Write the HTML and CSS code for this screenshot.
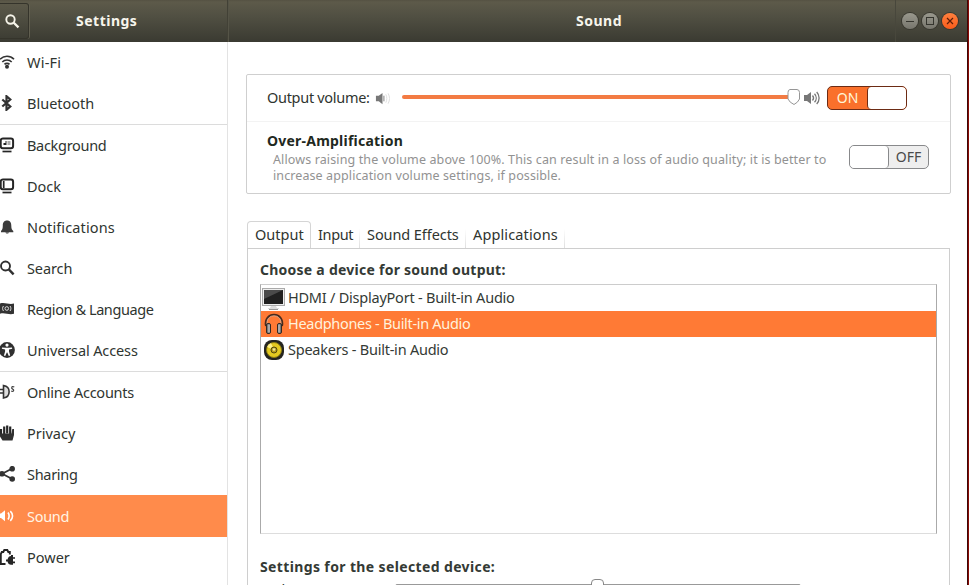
FILE: index.html
```
<!DOCTYPE html>
<html lang="en">
<head>
<meta charset="utf-8">
<title>Settings</title>
<link rel="stylesheet" href="styles.css">
</head>
<body>
<div class="window">
  <header class="titlebar">
    <div class="title-left">
      <div class="search-button"><svg width="16" height="16" viewBox="0 0 16 16"><circle cx="5.5" cy="5.500" r="4.200" fill="none" stroke="#f6f4e9" stroke-width="1.900"/><path d="M8.500 8.500 13.500 13.300" stroke="#f6f4e9" stroke-width="2.300"/></svg></div>
      <h1 class="t-settings">Settings</h1>
    </div>
    <div class="title-right">
      <h1 class="t-sound">Sound</h1>
      <div class="controls">
        <span class="control"><svg width="16" height="16"><path d="M4 8.5h8" stroke="#35352e"/></svg></span>
        <span class="control"><svg width="16" height="16"><rect x="4.5" y="4.5" width="7" height="7" fill="none" stroke="#35352e"/></svg></span>
        <span class="control close"><svg width="16" height="16"><path d="m5 5 6 6m0-6-6 6" stroke="#5c1d08" stroke-width="1.2"/></svg></span>
      </div>
    </div>
  </header>
  <div class="body">
    <nav class="sidebar">
      <div class="row"><svg class="icon" viewBox="0 0 16 16"><g fill="none" stroke="#333" stroke-width="1.6"><path d="M0 5.300a9.600 9.600 0 0 1 14 0M2.300 8a6.500 6.500 0 0 1 9.400 0M4.500 10.400a3.500 3.500 0 0 1 5 0"/></g><circle cx="7" cy="12.700" r="2" fill="#333"/></svg><span class="s-wifi">Wi-Fi</span></div>
      <div class="row line"><svg class="icon" viewBox="0 0 16 16"><path d="m2.300 4.500 8 7L6.500 14.800V1.200l3.800 3.300-8 7" fill="none" stroke="#333" stroke-width="2.200"/></svg><span class="s-bluetooth">Bluetooth</span></div>
      <div class="row"><svg class="icon" viewBox="0 0 16 16"><rect x=".7" y="1.500" width="12.400" height="9.800" rx="2.200" fill="#fff" stroke="#252525" stroke-width="2"/><path d="M3.500 8V6h2V4h1v4z" fill="#252525"/><path d="M7.500 4h3v4h-3z" fill="#aaa"/><path d="M2.500 14.500h9" stroke="#252525" stroke-width="1.700"/></svg><span class="s-background">Background</span></div>
      <div class="row"><svg class="icon" viewBox="0 0 16 16"><rect x=".7" y="1.500" width="12.400" height="9.800" rx="2.200" fill="#fff" stroke="#252525" stroke-width="2"/><path d="M3.700 3v7" stroke="#252525" stroke-width="1.700"/><path d="M2.500 14.500h9" stroke="#252525" stroke-width="1.700"/></svg><span class="s-dock">Dock</span></div>
      <div class="row"><svg class="icon" viewBox="0 0 16 16"><path d="M7 1.500c3.200 0 4.300 2.200 4.300 5.200 0 2.700.5 4 2 5.300v1.200H1V12c1.300-1.300 1.800-2.600 1.800-5.300C2.800 3.700 4 1.500 7 1.500zM5.500 13.500h3.400c0 1.400-3.400 1.400-3.400 0z" fill="#3b3b3b"/></svg><span class="s-notifications">Notifications</span></div>
      <div class="row"><svg class="icon" viewBox="0 0 16 16"><circle cx="5.500" cy="6" r="4.500" fill="none" stroke="#303030" stroke-width="1.900"/><path d="m8.800 9.300 4.800 5" stroke="#303030" stroke-width="2.400"/></svg><span class="s-search">Search</span></div>
      <div class="row"><svg class="icon" viewBox="0 0 16 16"><path d="M0 2.500c5-1.500 9 1.500 14 0v10.200c-5 1.600-9-1.500-14 0z" fill="#333"/><g fill="none" stroke="#ddd"><circle cx="6.800" cy="7.500" r="1.800"/><path d="M3.500 5c-1.200 1.300-1.200 3.500 0 5M10 5c1.200 1.400 1.200 3.600 0 5"/></g></svg><span class="s-region">Region &amp; Language</span></div>
      <div class="row line"><svg class="icon" viewBox="0 0 16 16"><circle cx="7" cy="8" r="7.900" fill="#303030"/><circle cx="7" cy="3.100" r="1.600" fill="#fff"/><path d="M2 5.400 5.500 5.800h3l3.500-.4.200 1.300-3.200.8v2.100l1.200 4-1.400.4-1.500-3.600h-.5L5.200 14l-1.300-.4 1.200-4V7.500l-3.200-.8z" fill="#fff"/></svg><span class="s-universal">Universal Access</span></div>
      <div class="row"><svg class="icon" viewBox="0 0 16 16"><path d="M0 5.500h3M0 9h3" stroke="#333" stroke-width="1.500"/><path d="M3.500 1.500v12.500c7.500-1.200 7.500-11.300 0-12.500z" fill="#ddd" stroke="#333" stroke-width="1.600"/><path d="M14.300 3c-3-1.300-3.200 1.500-1.600 2.100s1.200 2.900-1.600 1.900" fill="none" stroke="#444" stroke-width="1.200"/></svg><span class="s-online">Online Accounts</span></div>
      <div class="row"><svg class="icon" viewBox="0 0 16 16"><path d="M1 4v6M4.200 1.500v8M7.200.5v8M10.200 1.500v8" stroke="#252525" stroke-width="2.200"/><path d="M0 8.500h11.500L12.300 4H14v6l-1.500 5.500h-10L0 11.500z" fill="#303030"/></svg><span class="s-privacy">Privacy</span></div>
      <div class="row"><svg class="icon" viewBox="0 0 16 16"><path d="m12.200 2.500-10 5.300 10 5.200" fill="none" stroke="#333" stroke-width="1.800"/><g fill="#333"><circle cx="12.200" cy="2.700" r="2.800"/><circle cx="2" cy="7.800" r="2.800"/><circle cx="12.200" cy="13" r="2.800"/></g></svg><span class="s-sharing">Sharing</span></div>
      <div class="row active"><svg class="icon" viewBox="0 0 16 16"><path d="M0 5.500h1L5 2.300v11L1 10H0z" fill="#fff"/><path d="M8 4.500c1.300 2 1.300 5 0 7M10.300 3.200c3 2.800 3 6.800 0 9.600" fill="none" stroke="#fff" stroke-width="1.600"/></svg><span class="s-snd">Sound</span></div>
      <div class="row"><svg class="icon" viewBox="0 0 16 16"><path d="M5.500 15H.8V5l1-2h1.500l1-2h3l1 2h1.500v2.500" fill="none" stroke="#252525" stroke-width="1.900"/><path d="M6 10.500h1.500c.5-2.500 2-3.500 3.500-3.500V6h2v2.200h2v1.600h-2v2.800h2v1.600h-2v1.500h-2c-1.700 0-3-1-3.500-3.200H6z" fill="#252525"/></svg><span class="s-power">Power</span></div>
    </nav>
    <main class="content">
      <section class="volume-panel">
        <div class="volume-row">
          <span class="label s-outvol">Output volume:</span>
          <svg class="quiet" viewBox="0 0 16 16"><path d="M1 5h3l4-3v12l-4-3H1z" fill="#777"/><path d="M9.500 5v6" stroke="#777"/><path d="M11.500 3.500c1.500 3 1.500 6 0 9M14 2.500c2 4 2 7 0 11" fill="none" stroke="#ddd"/></svg>
          <div class="slider"><svg class="knob" width="14" height="18" viewBox="0 0 14 18"><path d="M3 1.500h7q2.500.2 2.500 3V11Q11 14.500 7 16.500 2.500 14.500 1 11V4.500q0-2.800 2-3z" fill="#fff" stroke="#969696"/></svg></div>
          <svg class="loud" viewBox="0 0 16 16"><path d="M0 5h3l4-3v12l-4-3H0z" fill="#777"/><path d="M8.500 5.500c1.300 1.500 1.300 3.500 0 5M10.500 3.700c2.300 2.500 2.300 6.100 0 8.600M12.700 2c3.200 3.300 3.200 8.700 0 12" fill="none" stroke="#777" stroke-width="1.300"/></svg>
          <div class="switch on"><span class="s-on">ON</span><i></i></div>
        </div>
        <div class="amp-row">
          <div class="amp-text">
            <h2 class="s-over">Over-Amplification</h2>
            <p><span class="s-p1">Allows raising the volume above 100%. This can result in a loss of audio quality; it is better to</span><br><span class="s-p2">increase application volume settings, if possible.</span></p>
          </div>
          <div class="switch off"><i></i><span class="s-off">OFF</span></div>
        </div>
      </section>
      <div class="tabs">
        <div class="tab current"><span class="s-output">Output</span></div>
        <div class="tab input"><span class="s-input">Input</span></div>
        <div class="tab effects"><span class="s-effects">Sound Effects</span></div>
        <div class="tab apps"><span class="s-apps">Applications</span></div>
      </div>
      <section class="notebook">
        <h2 class="s-choose">Choose a device for sound output:</h2>
        <div class="devices">
          <div class="device"><svg width="26" height="26" viewBox="0 0 26 26"><rect x="1.500" y="3.500" width="22" height="17" fill="#eee" stroke="#aaa"/><rect x="3" y="5" width="19" height="14" fill="#202020"/><path d="M3 5h19L3 14z" fill="#4a4a4a"/><path d="M10 21h5l1 2h2v1H7v-1h2z" fill="#ddd"/><path d="M8 24.500h9" stroke="#999"/></svg><span class="s-hdmi">HDMI / DisplayPort - Built-in Audio</span></div>
          <div class="device selected"><svg width="26" height="26" viewBox="0 0 26 26"><path d="M5 15C2 0 24 0 21 15" fill="none" stroke="#4b2a1c" stroke-width="2"/><path d="M6 13C5 2 21 2 20 13" fill="none" stroke="#d8b6a3" stroke-width=".8"/><g fill="#777" stroke="#332923"><rect x="5.500" y="12.500" width="4" height="10" rx="1.500"/><rect x="16.500" y="12.500" width="4" height="10" rx="1.500"/></g><path d="M8 13.500v8M18 13.500v8" stroke="#ddd"/></svg><span class="s-head">Headphones - Built-in Audio</span></div>
          <div class="device"><svg width="26" height="26" viewBox="0 0 26 26"><rect x="3" y="3" width="20" height="20" rx="8" fill="#252520"/><circle cx="13" cy="13" r="7.500" fill="#e4ca20" stroke="#8c7b12"/><path d="m13 13-7-3a8 8 0 0 1 4-4z" fill="#fff08a"/><circle cx="13" cy="13" r="3" fill="#b99f1b" stroke="#51480e"/><circle cx="13" cy="12.500" r="1.300" fill="#eee6a0"/></svg><span class="s-speak">Speakers - Built-in Audio</span></div>
        </div>
        <h2 class="s-selected">Settings for the selected device:</h2>
        <div class="balance"><span>Balance:</span><div class="balance-track"><i></i></div></div>
      </section>
    </main>
  </div>
</div>
</body>
</html>
```
FILE: styles.css
```
* { box-sizing: border-box; }
html, body { margin: 0; height: 100%; overflow: hidden; }
body { width: 969px; background: linear-gradient(90deg, #3c0808 968px, #8a0b05 968px); font: 14.5px/20px "Noto Sans", "Open Sans", sans-serif; color: #2f3530; }
h1, h2, p { margin: 0; }
svg { display: block; flex: none; }
span, h1, h2 { white-space: nowrap; }
.window { width: 967px; height: 585px; background: #fff; overflow: hidden; }
.titlebar { display: flex; height: 42px; background: linear-gradient(#555143 0, #5d5a4a 2px, #504f42 17px, #3b3b32 41px); }
.titlebar h1 { font-size: 14px; line-height: 42px; color: #f7f5ec; font-weight: 700; letter-spacing: .5px; }
.title-left { width: 228px; display: flex; border-right: 1px solid #424136; }
.search-button { width: 29px; height: 36px; margin: 3px 47px 0 0; border: 1px solid #35342b; border-left: 0; border-radius: 0 3px 3px 0; padding: 10px 0 0 5px; box-shadow: 1px 0 #615f50; }
.title-right { flex: 1; display: flex; padding-left: 347px; justify-content: space-between; border-left: 1px solid #555447; }
.controls { display: flex; gap: 4px; padding: 13px 9px 0 6px; border-left: 1px solid #48473c; }
.control { width: 16px; height: 16px; border-radius: 50%; background: linear-gradient(#99988d, #77766d); box-shadow: 0 0 0 1px #38372f; }
.close { background: linear-gradient(#ff803e, #f95c1b); }
.body { display: flex; height: 543px; }
.sidebar { width: 228px; border-right: 1px solid #e3e3e3; }
.row { height: 41px; display: flex; align-items: center; gap: 11px; padding-bottom: 1px; }
.row.line { height: 42px; border-bottom: 1px solid #dcdcdc; }
.row.active { height: 42px; padding-bottom: 0; background: #ff8b4b; color: #fff4e4; }
.icon { width: 16px; height: 16px; }
.s-wifi { letter-spacing: .2px; }
.s-background { letter-spacing: -.3px; }
.s-notifications { letter-spacing: .12px; }
.s-search { letter-spacing: -.1px; }
.s-region { letter-spacing: -.42px; }
.s-universal { letter-spacing: -.12px; }
.s-online { letter-spacing: -.25px; }
.s-sharing, .s-snd { letter-spacing: -.3px; }
.content { flex: 1; padding: 32px 16px 0 18px; }
.volume-panel { width: 705px; height: 120px; border: 1px solid #cfcfcf; border-radius: 2px; }
.volume-row { height: 47px; padding-left: 20px; display: flex; align-items: center; border-bottom: 1px solid #f3f3f3; }
.label { flex: none; width: 104px; padding-bottom: 2px; }
.s-outvol { letter-spacing: -.3px; }
.quiet { width: 15px; height: 15px; margin: 0 12px 0 4px; }
.slider { flex: none; width: 398px; height: 4px; border-radius: 2px; background: #f37b43; display: flex; align-items: center; justify-content: flex-end; margin-top: -2px; }
.knob { margin-right: -1px; }
.loud { width: 16px; height: 16px; margin: 0 7px 0 4px; }
.switch { flex: none; display: flex; width: 80px; height: 24px; border: 1px solid #88898b; border-radius: 5px; overflow: hidden; }
.switch span { flex: 1; text-align: center; line-height: 22px; font-size: 14px; }
.switch i { width: 39px; background: #fff; border-radius: 4px; }
.on { background: #fa702b; border-color: #6c2b14; color: #fff6d8; }
.on i { border-left: 1px solid #6c2b14; }
.off { background: #eee; color: #4a4a4a; margin-top: 23px; }
.off i { border-right: 1px solid #88898b; }
.amp-row { display: flex; justify-content: space-between; padding: 0 21px 0 20px; }
.amp-text { padding-top: 9px; }
h2 { font-size: 14px; line-height: 20px; font-weight: 700; }
.amp-text h2 { color: #1f2921; }
.s-over { letter-spacing: .22px; }
p { padding: 1px 0 0 6px; font-size: 12.5px; line-height: 16px; color: #929292; }
.s-p1 { letter-spacing: .125px; }
.s-p2 { letter-spacing: .1px; }
.tabs { display: flex; height: 27px; margin: 27px 0 0 1px; }
.tab { border-right: 1px solid #e4e4e4; line-height: 26px; padding-left: 7px; }
.current { width: 64px; border: 1px solid #d5d5d5; border-bottom: 0; border-radius: 4px 4px 0 0; line-height: 24px; }
.input { width: 49px; }
.effects { width: 106px; }
.apps { width: 99px; }
.input, .effects, .apps { border-image: linear-gradient(#fff 30%, #ddd) 1; }
.s-input { letter-spacing: -.35px; }
.s-effects { letter-spacing: -.08px; }
.s-apps { letter-spacing: .13px; }
.notebook { width: 703px; height: 400px; margin-left: 1px; border: 1px solid #cecece; padding: 11px 12px 0; color: #343a35; }
.s-choose { letter-spacing: .25px; }
.devices { width: 677px; height: 250px; margin-top: 4px; border: 1px solid #aaa; border-top-color: #ccc; border-bottom-color: #ddd; }
.device { display: flex; height: 26px; line-height: 24px; gap: 1px; }
.selected { background: #ff7a35; color: #fff2dc; }
.s-hdmi { letter-spacing: -.23px; }
.s-head { letter-spacing: -.31px; }
.s-speak { letter-spacing: -.23px; }
.s-selected { margin-top: 23px; letter-spacing: .37px; }
.balance { display: flex; padding: 2px 0 0 4px; }
.balance-track { width: 406px; height: 4px; margin: 5px 0 0 74px; border: 1px solid #999; border-radius: 2px; }
.balance-track i { display: block; width: 13px; height: 16px; margin: -6px 0 0 195px; border: 1px solid #888; border-radius: 4px; background: #fff; }
```
